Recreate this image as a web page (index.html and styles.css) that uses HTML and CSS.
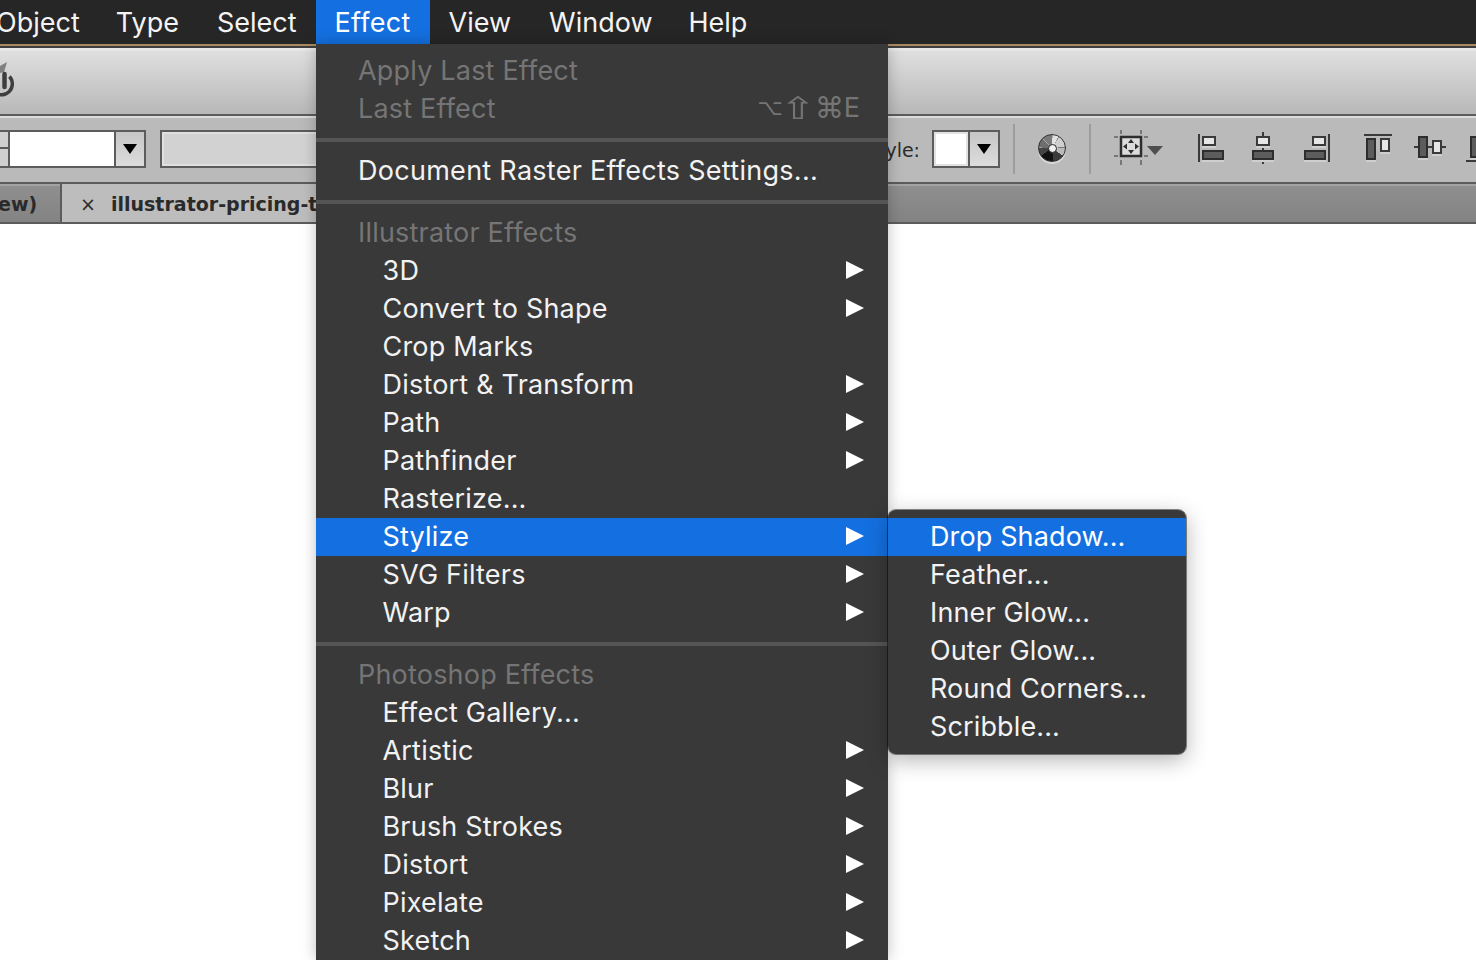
FILE: index.html
```html
<!DOCTYPE html>
<html lang="en">
<head>
    <meta charset="UTF-8">
    <meta name="viewport" content="width=device-width, initial-scale=1.0">
    <title>Effect menu</title>
    <link rel="stylesheet" href="styles.css">
</head>
<body>
    <!-- menu bar -->
    <div class="menubar">
        <span class="top_item first_item">Object</span>
        <span class="top_item">Type</span>
        <span class="top_item">Select</span>
        <span class="top_item active">Effect</span>
        <span class="top_item">View</span>
        <span class="top_item tight">Window</span>
        <span class="top_item">Help</span>
    </div>

    <!-- upper toolbar -->
    <div class="toolbar_top">
        <svg class="power" width="16" height="40" viewBox="0 0 16 40">
            <path d="M7 4 L0 8 V15 L4 14 Z" fill="#808080"/>
            <path d="M9.500 18.500 A11 11 0 1 1 -8 20" fill="none" stroke="#3e3e3e" stroke-width="3.500"/>
            <path d="M4.500 16 V29" stroke="#3e3e3e" stroke-width="4.500" stroke-linecap="round"/>
        </svg>
    </div>

    <!-- control bar -->
    <div class="toolbar_ctrl">
        <div class="stepper"></div>
        <div class="combo">
            <div class="combo_field"></div>
            <div class="combo_btn"><i class="down"></i></div>
        </div>
        <div class="text_field"></div>
        <span class="ctrl_label">Style:</span>
        <div class="combo style_combo">
            <div class="combo_field"></div>
            <div class="combo_btn"><i class="down"></i></div>
        </div>
        <div class="vsep sep_a"></div>
        <div class="globe"><i></i></div>
        <div class="vsep sep_b"></div>
        <svg class="transform" width="52" height="36" viewBox="0 0 52 36">
            <path d="M2 7H6M2 26H6M32 7H36M32 26H36M9 0V4M9 30V35M29 0V4M29 30V35" stroke="#777" stroke-width="2"/>
            <rect x="9" y="7" width="20" height="19" fill="#dcdcdc" stroke="#2e2e2e" stroke-width="2.500"/>
            <path d="M19 9L22 13H16ZM19 24L22 20H16ZM11 16.500L15 13.500V19.500ZM27 16.500L23 13.500V19.500Z" fill="#2e2e2e"/>
            <path d="M35 16H51L43 25Z" fill="#4f4f4f"/>
        </svg>
        <div class="align_group first">
            <svg width="30" height="36" viewBox="0 0 30 36">
                <rect x="2" y="4" width="2" height="28" fill="#3a3a3a"/>
                <rect class="box_light" x="7" y="7" width="12" height="8"/>
                <rect class="box_dark" x="7" y="21" width="20" height="8"/>
            </svg>
            <svg width="30" height="36" viewBox="0 0 30 36">
                <rect x="12" y="2" width="2" height="32" fill="#3a3a3a"/>
                <rect class="box_light" x="7" y="7" width="12" height="8"/>
                <rect class="box_dark" x="3" y="21" width="20" height="8"/>
            </svg>
            <svg width="30" height="36" viewBox="0 0 30 36">
                <rect x="24" y="4" width="2" height="28" fill="#3a3a3a"/>
                <rect class="box_light" x="9" y="7" width="12" height="8"/>
                <rect class="box_dark" x="1" y="21" width="20" height="8"/>
            </svg>
        </div>
        <div class="align_group">
            <svg width="32" height="36" viewBox="0 0 32 36">
                <rect x="2" y="4" width="28" height="2" fill="#3a3a3a"/>
                <rect class="box_dark" x="5" y="9" width="8" height="20"/>
                <rect class="box_light" x="19" y="9" width="8" height="12"/>
            </svg>
            <svg width="32" height="36" viewBox="0 0 32 36">
                <rect x="0" y="16" width="32" height="2" fill="#3a3a3a"/>
                <rect class="box_dark" x="5" y="7" width="8" height="20"/>
                <rect class="box_light" x="19" y="11" width="8" height="12"/>
            </svg>
            <svg width="32" height="36" viewBox="0 0 32 36">
                <rect x="0" y="30" width="32" height="2" fill="#3a3a3a"/>
                <rect class="box_dark" x="5" y="7" width="8" height="20"/>
            </svg>
        </div>
    </div>

    <!-- document tabs -->
    <div class="tabs">
        <div class="tab_old">ew)</div>
        <div class="tab_cur"><span class="tab_x">×</span>illustrator-pricing-table.ai</div>
    </div>

    <!-- Effect dropdown -->
    <div class="menu">
        <div class="row head">Apply Last Effect</div>
        <div class="row head">Last Effect<span class="keys"><span class="key_opt">⌥</span><span class="key_shift">⇧</span><span class="key_cmd">⌘</span><b>E</b></span></div>
        <div class="sep"></div>
        <div class="row plain">Document Raster Effects Settings...</div>
        <div class="sep"></div>
        <div class="row head">Illustrator Effects</div>
        <div class="row sub">3D<i class="arrow"></i></div>
        <div class="row sub">Convert to Shape<i class="arrow"></i></div>
        <div class="row sub">Crop Marks</div>
        <div class="row sub">Distort &amp; Transform<i class="arrow"></i></div>
        <div class="row sub">Path<i class="arrow"></i></div>
        <div class="row sub">Pathfinder<i class="arrow"></i></div>
        <div class="row sub">Rasterize...</div>
        <div class="row sub on">Stylize<i class="arrow"></i></div>
        <div class="row sub">SVG Filters<i class="arrow"></i></div>
        <div class="row sub">Warp<i class="arrow"></i></div>
        <div class="sep"></div>
        <div class="row head">Photoshop Effects</div>
        <div class="row sub">Effect Gallery...</div>
        <div class="row sub">Artistic<i class="arrow"></i></div>
        <div class="row sub">Blur<i class="arrow"></i></div>
        <div class="row sub">Brush Strokes<i class="arrow"></i></div>
        <div class="row sub">Distort<i class="arrow"></i></div>
        <div class="row sub">Pixelate<i class="arrow"></i></div>
        <div class="row sub">Sketch<i class="arrow"></i></div>
    </div>

    <!-- Stylize flyout -->
    <div class="flyout">
        <div class="row on">Drop Shadow...</div>
        <div class="row">Feather...</div>
        <div class="row">Inner Glow...</div>
        <div class="row">Outer Glow...</div>
        <div class="row">Round Corners...</div>
        <div class="row">Scribble...</div>
    </div>
</body>
</html>
```

FILE: styles.css
```css
*{
    margin: 0;
    padding: 0;
    box-sizing: border-box;
}
html,body{
    height: 960px;
    overflow: hidden;
    background: #fff;
}
body{
    position: relative;
    font-family: Inter, "Noto Sans", sans-serif;
}
i{
    display: block;
}

/* menu bar */
.menubar{
    display: flex;
    height: 48px;
    margin-left: -25px;
    background: linear-gradient(#262626 44px, #a98a63 44px, #a98a63 46px, #3f3f3f 46px);
}
.top_item{
    height: 44px;
    padding: 1px 19px 0;
    line-height: 44px;
    font-size: 27px;
    color: #f4f4f4;
}
.top_item.first_item{
    padding-left: 21px;
    padding-right: 17px;
}
.top_item.tight{
    padding-right: 17px;
}
.top_item.active{
    width: 114px;
    background: #1470e0;
    color: #fff;
    letter-spacing: .3px;
}

/* toolbars */
.toolbar_top{
    height: 68px;
    padding-top: 10px;
    border-bottom: 2px solid #5c5c5c;
    background: linear-gradient(#e8e8e8 2px, #dfdfdf 3px, #b8b8b8);
}
.power{
    display: block;
}
.toolbar_ctrl{
    display: flex;
    align-items: center;
    height: 66px;
    padding-bottom: 2px;
    border-top: 2px solid #dcdcdc;
    background: #bababa;
}
.toolbar_ctrl > *{
    flex: none;
}
.stepper{
    width: 10px;
    height: 38px;
    border: 2px solid #5c5c5c;
    border-left: 0;
    background: linear-gradient(#d0d0d0 15px, #5c5c5c 15px, #5c5c5c 17px, #d0d0d0 17px);
}
.combo{
    display: flex;
    width: 136px;
    height: 38px;
    border: 2px solid #5c5c5c;
    border-left: 0;
}
.combo_field{
    flex: 1;
    background: #fff;
}
.combo_btn{
    display: flex;
    align-items: center;
    justify-content: center;
    width: 30px;
    border-left: 2px solid #5c5c5c;
    background: linear-gradient(#c6c6c6, #dcdcdc);
}
.down{
    width: 0;
    height: 0;
    border-left: 7px solid transparent;
    border-right: 7px solid transparent;
    border-top: 10px solid #000;
}
.text_field{
    width: 320px;
    height: 38px;
    margin-left: 14px;
    border: 2px solid #5c5c5c;
    background: #d2d2d2;
    box-shadow: inset 0 0 0 2px #e0e0e0;
}
.ctrl_label{
    width: 60px;
    margin-left: 380px;
    padding-top: 2px;
    text-align: right;
    font-family: "DejaVu Sans", sans-serif;
    font-size: 19px;
    color: #2b2b2b;
}
.style_combo{
    width: 68px;
    margin-left: 12px;
    border-left: 2px solid #5c5c5c;
}
.style_combo .combo_field{
    border: 2px solid #e2e2e2;
}
.vsep{
    width: 2px;
    height: 50px;
    background: #9c9c9c;
}
.sep_a{
    margin-left: 13px;
}
.sep_b{
    margin-left: 23px;
}
.globe{
    display: flex;
    align-items: center;
    justify-content: center;
    width: 28px;
    height: 28px;
    margin-left: 23px;
    margin-bottom: 2px;
    border: 1px solid #333;
    border-radius: 50%;
    background: conic-gradient(#a8a8a8 0 3deg, #e2e2e2 3deg 30deg, #8e8e8e 30deg 33deg, #cfcfcf 33deg 85deg, #777 85deg 88deg, #bbb 88deg 125deg, #555 125deg 128deg, #3a3a3a 128deg 175deg, #111 175deg 235deg, #444 235deg 270deg, #a0a0a0 270deg 273deg, #6e6e6e 273deg 315deg, #aaa 315deg 318deg, #7a7a7a 318deg 360deg);
    box-shadow: 0 2px 0 #d8d8d8;
}
.globe i{
    width: 9px;
    height: 9px;
    border-radius: 50%;
    background: #f0f0f0;
    border: 1.500px solid #222;
}
.transform{
    margin-left: 21px;
    margin-bottom: 2px;
}
.align_group{
    display: flex;
    flex: none;
    margin-left: 28px;
    margin-bottom: 2px;
    gap: 24px;
}
.align_group.first{
    margin-left: 32px;
}
.align_group + .align_group{
    gap: 20px;
}
.align_group svg{
    flex: none;
}
.box_light{
    fill: #e6e6e6;
    stroke: #3a3a3a;
    stroke-width: 2;
    filter: drop-shadow(0 2px 0 #cfcfcf);
}
.box_dark{
    fill: #5c5c5c;
    stroke: #2e2e2e;
    stroke-width: 2;
    filter: drop-shadow(0 2px 0 #cfcfcf);
}

/* tabs */
.tabs{
    display: flex;
    height: 42px;
    border-top: 2px solid #5c5c5c;
    border-bottom: 2px solid #5c5c5c;
    background: linear-gradient(#a4a4a4 2px, #8f8f8f 2px, #838383);
    font-family: "DejaVu Sans", sans-serif;
    font-weight: bold;
    font-size: 19px;
    line-height: 40px;
    color: #2a2a2a;
}
.tab_old{
    width: 62px;
    border-right: 2px solid #5c5c5c;
    text-indent: -2px;
    white-space: nowrap;
}
.tab_cur{
    width: 320px;
    background: #bdbdbd;
    white-space: nowrap;
    overflow: hidden;
}
.tab_x{
    display: inline-block;
    width: 49px;
    padding-left: 18px;
    font-weight: normal;
}

/* dropdown */
.menu{
    position: absolute;
    left: 316px;
    top: 44px;
    bottom: 0;
    width: 572px;
    padding-top: 8px;
    overflow: hidden;
    background: #393939;
    box-shadow: 0 0 14px rgba(0,0,0,.25);
    letter-spacing: .2px;
}
.row{
    display: flex;
    align-items: center;
    justify-content: space-between;
    height: 38px;
    padding-bottom: 2px;
    font-size: 27px;
    color: #f2f2f2;
}
.menu .head{
    padding-left: 42px;
    padding-right: 28px;
    color: #757575;
}
.menu .plain{
    padding-left: 42px;
    padding-right: 28px;
    letter-spacing: .28px;
}
.menu .sub{
    padding-left: 66.500px;
    padding-right: 24px;
}
.row.on{
    background: #1470e0;
    color: #fff;
}
.arrow{
    width: 0;
    height: 0;
    border-top: 9px solid transparent;
    border-bottom: 9px solid transparent;
    border-left: 18px solid #fff;
}
.keys{
    display: flex;
    align-items: center;
    font-family: "DejaVu Sans", sans-serif;
    font-size: 31px;
    line-height: 36px;
    letter-spacing: 0;
    color: #757575;
}
.key_opt{
    font-size: 22px;
    margin-right: 2px;
}
.key_shift{
    display: inline-block;
    transform: scaleX(1.4);
    margin-right: 4px;
}
.key_cmd{
    font-size: 29px;
}
.keys b{
    font-family: Inter, sans-serif;
    font-size: 27px;
    font-weight: normal;
}
.sep{
    height: 4px;
    margin: 10px 0;
    background: #555;
}

/* flyout */
.flyout{
    position: absolute;
    left: 888px;
    top: 510px;
    width: 298px;
    padding: 8px 0;
    border-radius: 8px;
    overflow: hidden;
    background: #393939;
    outline: 1px solid rgba(0,0,0,.45);
    box-shadow: 0 6px 22px rgba(0,0,0,.3);
    letter-spacing: .13px;
}
.flyout .row{
    padding-left: 42px;
}
```
